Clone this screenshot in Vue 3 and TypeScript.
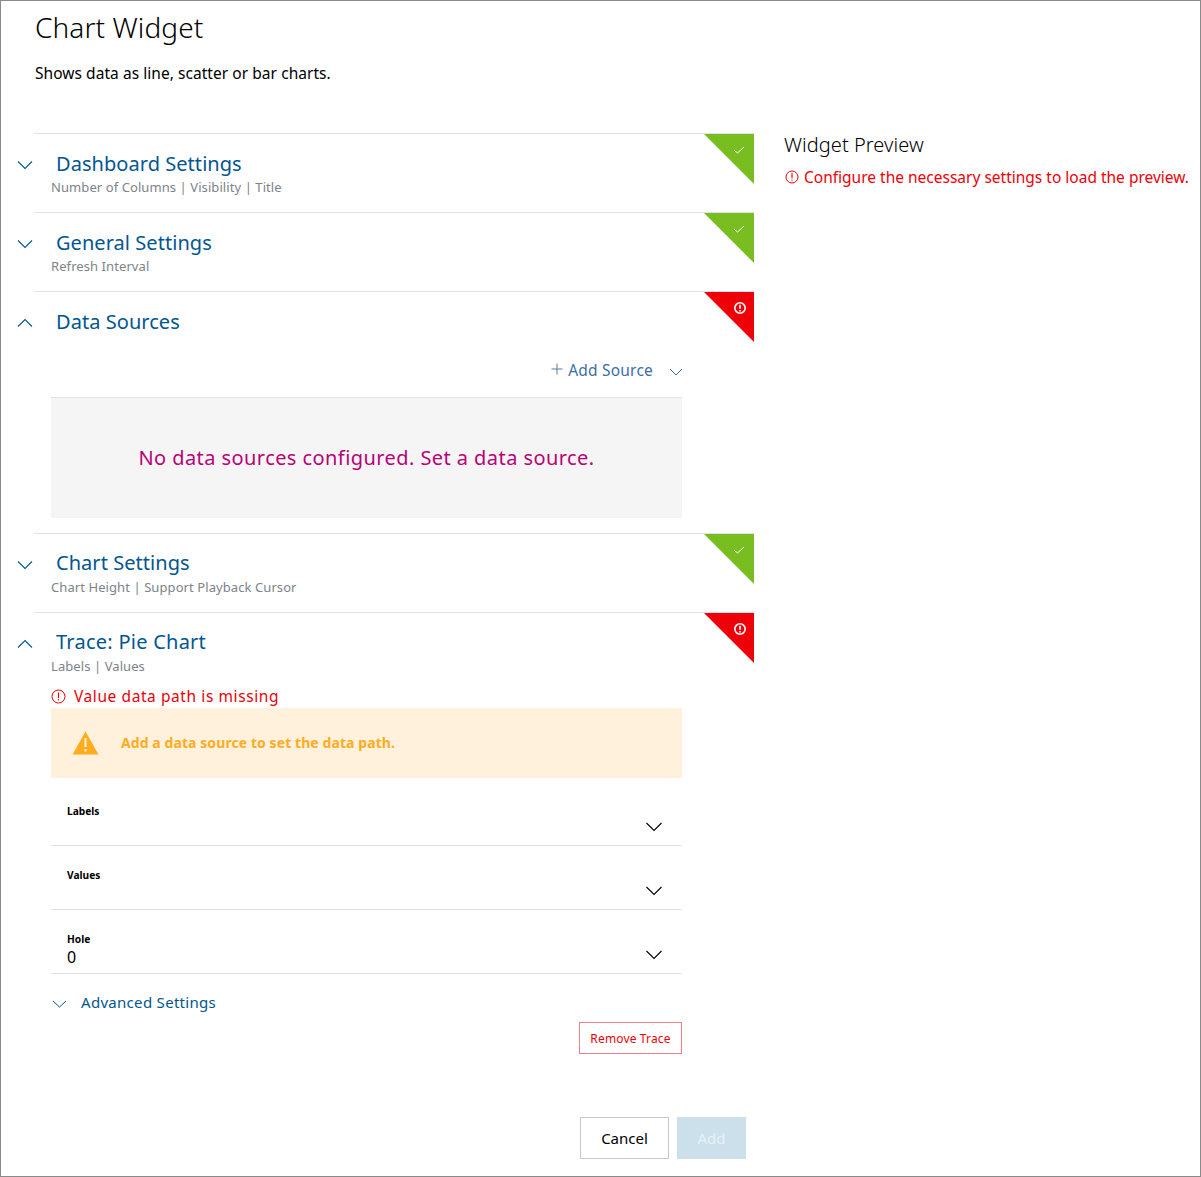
<script setup lang="ts">
const chevronDown = 'M1 1.5 L8 8.5 L15 1.5'
const chevronUp = 'M1 8.5 L8 1.5 L15 8.5'
const fields = [
  { label: 'Labels', value: '' },
  { label: 'Values', value: '' },
  { label: 'Hole', value: '0' },
]
</script>

<template>
  <div class="page">
    <header class="head">
      <h1 class="title">Chart Widget</h1>
      <p class="desc">Shows data as line, scatter or bar charts.</p>
    </header>

    <div class="columns">
      <main class="main">
        <section class="section">
          <div class="corner ok">
            <svg class="corner-icon" width="12" height="10" viewBox="0 0 12 10"><path d="M1 5 L4.5 8 L11 2" fill="none" stroke="#fff" stroke-width="1"/></svg>
          </div>
          <div class="sec-head">
            <svg class="chev" width="16" height="10" viewBox="0 0 16 10"><path :d="chevronDown" /></svg>
            <h2 class="sec-title">Dashboard Settings</h2>
          </div>
          <div class="sec-sub">Number of Columns | Visibility | Title</div>
        </section>

        <section class="section">
          <div class="corner ok">
            <svg class="corner-icon" width="12" height="10" viewBox="0 0 12 10"><path d="M1 5 L4.5 8 L11 2" fill="none" stroke="#fff" stroke-width="1"/></svg>
          </div>
          <div class="sec-head">
            <svg class="chev" width="16" height="10" viewBox="0 0 16 10"><path :d="chevronDown" /></svg>
            <h2 class="sec-title">General Settings</h2>
          </div>
          <div class="sec-sub">Refresh Interval</div>
        </section>

        <section class="section open-sources">
          <div class="corner bad">
            <svg class="corner-icon bad-icon" width="14" height="14" viewBox="0 0 14 14">
              <circle cx="7" cy="7" r="5.2" fill="none" stroke="#fff" stroke-width="1.6"/>
              <path d="M7 3.8 V7.8 M7 9 V10.4" stroke="#fff" stroke-width="1.7"/>
            </svg>
          </div>
          <div class="sec-head">
            <svg class="chev" width="16" height="10" viewBox="0 0 16 10"><path :d="chevronUp" /></svg>
            <h2 class="sec-title">Data Sources</h2>
          </div>
          <div class="add-row">
            <svg class="plus" width="12" height="12" viewBox="0 0 12 12"><path d="M6 0.5 V11.5 M0.5 6 H11.5" /></svg>
            <span class="add-text">Add Source</span>
            <svg class="add-chev" width="14" height="8" viewBox="0 0 14 8"><path d="M1 1 L7 7 L13 1" /></svg>
          </div>
          <div class="empty">No data sources configured. Set a data source.</div>
        </section>

        <section class="section tight">
          <div class="corner ok">
            <svg class="corner-icon" width="12" height="10" viewBox="0 0 12 10"><path d="M1 5 L4.5 8 L11 2" fill="none" stroke="#fff" stroke-width="1"/></svg>
          </div>
          <div class="sec-head">
            <svg class="chev" width="16" height="10" viewBox="0 0 16 10"><path :d="chevronDown" /></svg>
            <h2 class="sec-title">Chart Settings</h2>
          </div>
          <div class="sec-sub">Chart Height | Support Playback Cursor</div>
        </section>

        <section class="section trace tight">
          <div class="corner bad">
            <svg class="corner-icon bad-icon" width="14" height="14" viewBox="0 0 14 14">
              <circle cx="7" cy="7" r="5.2" fill="none" stroke="#fff" stroke-width="1.6"/>
              <path d="M7 3.8 V7.8 M7 9 V10.4" stroke="#fff" stroke-width="1.7"/>
            </svg>
          </div>
          <div class="sec-head">
            <svg class="chev" width="16" height="10" viewBox="0 0 16 10"><path :d="chevronUp" /></svg>
            <h2 class="sec-title">Trace: Pie Chart</h2>
          </div>
          <div class="sec-sub">Labels | Values</div>
          <div class="trace-error">
            <svg width="15" height="15" viewBox="0 0 15 15"><circle cx="7.5" cy="7.5" r="6.5" fill="none" stroke="#ed0007" stroke-width="1"/><path d="M7.5 3.5 V9 M7.5 10 V11.5" stroke="#ed0007" stroke-width="1.1"/></svg>
            <span>Value data path is missing</span>
          </div>
          <div class="warning">
            <svg width="27" height="24" viewBox="0 0 27 24">
              <path d="M13.5 0.5 L26.5 23.5 H0.5 Z" fill="#ffac1f"/>
              <path d="M13.5 7 V16 M13.5 18 V20.5" stroke="#fff1dc" stroke-width="2"/>
            </svg>
            <span>Add a data source to set the data path.</span>
          </div>
          <div class="fields">
            <div v-for="f in fields" :key="f.label" class="field">
              <div class="field-label">{{ f.label }}</div>
              <div class="field-value">{{ f.value }}</div>
              <svg class="field-chev" width="16" height="10" viewBox="0 0 16 10"><path d="M0.5 1 L8 8.5 L15.5 1" /></svg>
            </div>
          </div>
          <div class="advanced">
            <svg width="15" height="8" viewBox="0 0 15 8"><path d="M1 1 L7.5 7 L14 1" /></svg>
            <span>Advanced Settings</span>
          </div>
          <div class="remove-row">
            <button class="remove" type="button">Remove Trace</button>
          </div>
        </section>
      </main>

      <aside class="preview">
        <h3 class="preview-title">Widget Preview</h3>
        <div class="preview-error">
          <svg width="14" height="14" viewBox="0 0 14 14"><circle cx="7" cy="7" r="6" fill="none" stroke="#ed0007" stroke-width="1"/><path d="M7 3 V8.2 M7 9.4 V10.8" stroke="#ed0007" stroke-width="1.1"/></svg>
          <span>Configure the necessary settings to load the preview.</span>
        </div>
      </aside>
    </div>

    <footer class="actions">
      <button class="btn cancel" type="button">Cancel</button>
      <button class="btn add" type="button">Add</button>
    </footer>
  </div>
</template>

<style>
html, body { margin: 0; background: #fff; }
</style>

<style scoped>
.page {
  box-sizing: border-box;
  width: 1201px;
  height: 1177px;
  border: 1px solid #8a8a8a;
  background: #fff;
  font-family: "Noto Sans", "Liberation Sans", sans-serif;
  color: #000;
  display: flex;
  flex-direction: column;
  overflow: hidden;
}
.head { padding: 8px 0 0 34px; }
.title { margin: 0; font-size: 28px; line-height: 36px; font-weight: 300; letter-spacing: 0.1px; }
.desc { margin: 17px 0 0; font-size: 15.5px; line-height: 22px; letter-spacing: 0.05px; }
.columns { display: flex; margin-top: 49px; padding-left: 33px; }
.main { width: 720px; flex: none; }
.preview { margin-left: 30px; }
.section {
  position: relative;
  box-sizing: border-box;
  height: 79px;
  border-top: 1px solid #e0e2e5;
}
.open-sources { height: 242px; }
.trace { height: auto; }
.corner { position: absolute; top: 0; right: 0; width: 50px; height: 50px; clip-path: polygon(0 0, 100% 0, 100% 100%); }
.ok { background: #78be20; }
.bad { background: #ed0007; }
.corner-icon { position: absolute; top: 11px; right: 9px; }
.bad-icon { top: 9px; right: 7px; }
.sec-head { display: flex; align-items: center; height: 24px; margin-top: 18px; margin-left: -17px; }
.chev { flex: none; fill: none; margin-top: 2px; }
.chev path { fill: none; stroke: #005691; stroke-width: 1.1; }
.sec-title { margin: 0 0 0 23px; font-size: 20px; font-weight: 400; line-height: 24px; color: #005691; letter-spacing: 0.05px; }
.tight .sec-title { margin-top: -2px; }
.trace .sec-title { letter-spacing: 0.25px; }
.sec-sub { margin: 2px 0 0 17px; font-size: 13px; line-height: 18px; color: #7d8389; letter-spacing: 0.08px; }
.add-row { display: flex; align-items: center; justify-content: flex-end; height: 24px; margin: 24px 71px 0 0; }
.plus { margin-top: -2px; }
.plus path { stroke: #5a7ca8; stroke-width: 1; fill: none; }
.add-text { margin-left: 5px; font-size: 15.5px; color: #3b6ea5; letter-spacing: 0.2px; }
.add-chev { margin-left: 16px; margin-top: 3px; }
.add-chev path { fill: none; stroke: #3b6ea5; stroke-width: 1; }
.empty {
  box-sizing: border-box;
  margin: 15px 72px 0 17px;
  height: 121px;
  padding-bottom: 2px;
  border-top: 1px solid #e0e2e5;
  background: #f5f5f5;
  display: flex;
  align-items: center;
  justify-content: center;
  color: #b90276;
  font-size: 20px;
  letter-spacing: 0.43px;
}
.trace-error { display: flex; align-items: center; gap: 8px; margin: 11px 0 0 17px; height: 20px; color: #ed0007; font-size: 15.5px; letter-spacing: 0.58px; }
.warning {
  box-sizing: border-box;
  display: flex;
  align-items: center;
  gap: 22px;
  height: 70px;
  margin: 2px 72px 0 17px;
  padding: 0 0 2px 21px;
  background: #fff1dc;
  color: #ffac1f;
  font-size: 14px;
  font-weight: 700;
  letter-spacing: 0.08px;
}
.warning svg { margin-bottom: -2px; }
.fields { margin-top: 4px; }
.field {
  box-sizing: border-box;
  position: relative;
  height: 64px;
  margin: 0 72px 0 17px;
  padding: 22px 16px 0;
  border-bottom: 1px solid #e0e2e5;
}
.field-label { font-size: 10.2px; font-weight: 700; line-height: 14px; }
.field-value { font-size: 16px; line-height: 20px; margin-top: 1px; }
.field-chev { position: absolute; right: 20px; bottom: 13px; }
.field-chev path { fill: none; stroke: #000; stroke-width: 1.1; }
.advanced { display: flex; align-items: center; gap: 14px; margin: 18px 0 0 18px; height: 20px; font-size: 15px; color: #005691; letter-spacing: 0.3px; }
.advanced svg { margin-top: 3px; }
.advanced path { fill: none; stroke: #005691; stroke-width: 1; }
.remove-row { display: flex; justify-content: flex-end; margin: 10px 72px 0 0; }
.remove {
  box-sizing: border-box;
  width: 103px;
  height: 32px;
  padding: 0;
  background: #fff;
  border: 1px solid #ee7f8c;
  color: #ed0007;
  font: inherit;
  font-size: 12px;
  letter-spacing: 0.15px;
}
.preview-title { margin: 0; font-size: 20px; line-height: 24px; font-weight: 300; letter-spacing: 0.05px; }
.preview-error { display: flex; align-items: center; gap: 5px; margin-top: 9px; padding-left: 1px; font-size: 15.5px; line-height: 22px; color: #ed0007; white-space: nowrap; }
.actions { display: flex; justify-content: flex-end; gap: 8px; margin-top: auto; padding: 0 454px 17px 0; }
.btn { box-sizing: border-box; height: 42px; padding: 0; font: inherit; font-size: 15px; }
.cancel { width: 89px; background: #fff; border: 1px solid #c8c8c8; color: #000; }
.add { width: 69px; background: #cce0eb; border: none; color: #e8f1f6; }
</style>
